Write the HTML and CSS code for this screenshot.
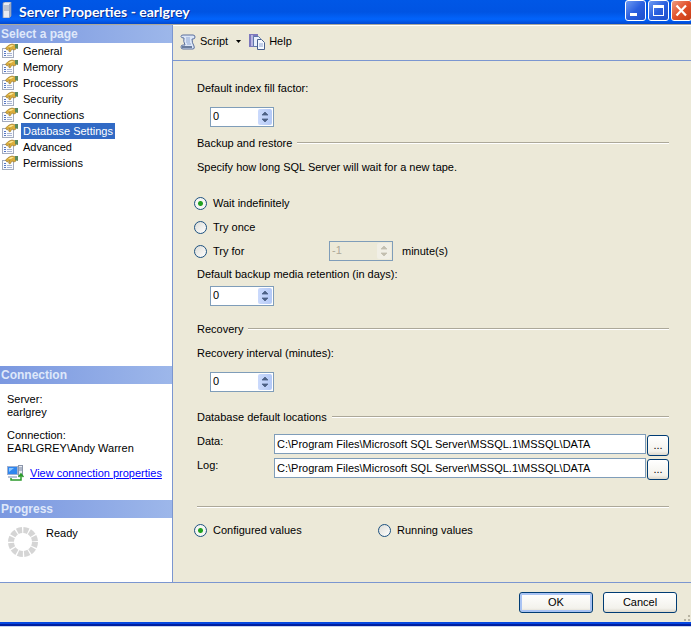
FILE: index.html
```html
<!DOCTYPE html>
<html lang="en">
<head>
  <meta charset="UTF-8" />
  <meta name="viewport" content="width=device-width, initial-scale=1.0"/>
  <title>Server Properties - earlgrey</title>
  <link rel="stylesheet" href="styles.css">
</head>
<body>
  <!-- shared icons -->
  <svg class="sprite" aria-hidden="true">
    <symbol id="icon-page" viewBox="0 0 16 16">
      <rect x="0.5" y="5.5" width="11" height="9" fill="#fafbfe" stroke="#a3abbd"/>
      <path d="M2 8h2v1H2zM2 10h2v1H2zM2 12h2v1H2z" fill="#5577c4"/>
      <path d="M5 10h5v1H5zM5 12h5v1H5z" fill="#a9b5d2"/>
      <path d="M3.500 5L7 2l3-1 4 1v4l-2 1-2-1-2 3-1.500-1L8 5.500 5 7z" fill="#dcae3c" stroke="#94701f" stroke-width="0.6"/>
      <path d="M6 4l3-2 3 0-3 2z" fill="#fbe692"/>
      <path d="M13 1h3v5l-3-1z" fill="#5b8a5c"/>
    </symbol>
    <symbol id="icon-spin" viewBox="0 0 14 16">
      <path d="M4 6h6L7 3zM4 10h6l-3 3z" fill="currentColor" stroke="currentColor" stroke-width="0.8"/>
    </symbol>
  </svg>

  <div class="window">
    <header class="titlebar">
      <svg class="title-icon" viewBox="0 0 10 16" aria-hidden="true">
        <path d="M1 1l2-1h6v14l-2 2H1z" fill="#e8ecf2" stroke="#8794ad" stroke-width="0.8"/>
        <path d="M7 2l2-1v13l-2 2z" fill="#9aa8c2"/>
        <path d="M2 4h5M2 6h5M2 8h5" stroke="#8f9bb0"/>
      </svg>
      <h1>Server Properties - earlgrey</h1>
      <button class="caption-button" aria-label="Minimize">
        <svg viewBox="0 0 19 19"><path d="M4 12h7v3H4z" fill="#fff"/></svg>
      </button>
      <button class="caption-button" aria-label="Maximize">
        <svg viewBox="0 0 19 19"><path d="M4 4h11v11H4zM5 7v7h9V7z" fill="#fff" fill-rule="evenodd"/></svg>
      </button>
      <button class="caption-button close" aria-label="Close">
        <svg viewBox="0 0 19 19"><path d="M4.500 4.500l9.500 10M14 4.500l-9.500 10" stroke="#fff" stroke-width="2.2"/></svg>
      </button>
    </header>

    <div class="main">
      <aside class="sidebar">
        <h2>Select a page</h2>
        <nav class="pages">
          <a href="#"><svg><use href="#icon-page"/></svg><span>General</span></a>
          <a href="#"><svg><use href="#icon-page"/></svg><span>Memory</span></a>
          <a href="#"><svg><use href="#icon-page"/></svg><span>Processors</span></a>
          <a href="#"><svg><use href="#icon-page"/></svg><span>Security</span></a>
          <a href="#"><svg><use href="#icon-page"/></svg><span>Connections</span></a>
          <a href="#" class="selected"><svg><use href="#icon-page"/></svg><span>Database Settings</span></a>
          <a href="#"><svg><use href="#icon-page"/></svg><span>Advanced</span></a>
          <a href="#"><svg><use href="#icon-page"/></svg><span>Permissions</span></a>
        </nav>

        <h2>Connection</h2>
        <div class="connection">
          <p>Server:<br>earlgrey</p>
          <p>Connection:<br>EARLGREY\Andy Warren</p>
          <div class="view-link">
            <svg viewBox="0 0 17 16" aria-hidden="true">
              <rect x="0.5" y="1.5" width="10" height="8" fill="#2f86ee" stroke="#9fb0d0"/>
              <path d="M2 3h5l-5 4z" fill="#8cc6ff"/>
              <path d="M1 11h9v2H1z" fill="#b9c2d6"/>
              <rect x="11.5" y="0.5" width="4" height="10" fill="#e8ebf2" stroke="#8c96ab"/>
              <path d="M12 3h3M12 5h3" stroke="#7483a0"/>
              <path d="M4 13v2h10v-5M11.500 12L14 9l2.500 3" fill="none" stroke="#2b9a2b" stroke-width="1.500"/>
            </svg>
            <a href="#">View connection properties</a>
          </div>
        </div>

        <h2>Progress</h2>
        <div class="progress">
          <svg viewBox="0 0 32 32" aria-hidden="true">
            <circle cx="16" cy="16" r="12" fill="none" stroke="#d5d5d5" stroke-width="6" stroke-dasharray="5 1.283"/>
          </svg>
          <span>Ready</span>
        </div>
      </aside>

      <section class="content">
        <div class="toolbar">
          <button>
            <svg viewBox="0 0 16 16" aria-hidden="true">
              <path d="M3 1h10q2 0 2 2t-2 2h-1q0 4 2 7 1 3-1 3H3q-2 0-2-2t2-2h2Q3 7 4 4 1 4 1 2.500T3 1z" fill="#dce7f8" stroke="#5a6f9c"/>
              <path d="M6 4h4M6 6h4M6 8h4M7 10h4" stroke="#8fa6d2"/>
              <path d="M2 13h10" stroke="#43587f" stroke-width="1.500"/>
            </svg>
            Script
          </button>
          <button class="arrow" aria-label="Script options"><svg viewBox="0 0 5 3"><path d="M0 0h5L2.500 3z"/></svg></button>
          <button class="help">
            <svg viewBox="0 0 16 16" aria-hidden="true">
              <path d="M0 0h9v13H0z" fill="#7d78bd"/>
              <path d="M2 1h2v11H2z" fill="#b9b6e2"/>
              <path d="M4.500 2.500h5l2 2v8h-7z" fill="#eaf1fc" stroke="#6079ab"/>
              <path d="M8.500 5.500h4l3 3v7h-7z" fill="#f5f9ff" stroke="#49618f"/>
              <path d="M10 10h4M10 12h4" stroke="#8fa6d2"/>
            </svg>
            Help
          </button>
        </div>

        <form class="settings">
          <label class="top-label" for="fillFactor">Default index fill factor:</label>
          <div class="spinner">
            <input type="text" id="fillFactor" value="0"/>
            <button type="button" aria-label="Change fill factor"><svg><use href="#icon-spin"/></svg></button>
          </div>

          <h3 class="backup">Backup and restore</h3>
          <p class="line">Specify how long SQL Server will wait for a new tape.</p>

          <div class="wait-options">
            <div class="radio-row"><input type="radio" name="wait" id="waitForever" checked/><label for="waitForever">Wait indefinitely</label></div>
            <div class="radio-row"><input type="radio" name="wait" id="tryOnce"/><label for="tryOnce">Try once</label></div>
            <div class="radio-row">
              <input type="radio" name="wait" id="tryFor"/><label class="try-for" for="tryFor">Try for</label>
              <div class="spinner disabled">
                <input type="text" id="tryMinutes" value="-1" disabled/>
                <button type="button" aria-label="Change minutes" disabled><svg><use href="#icon-spin"/></svg></button>
              </div>
              <label class="unit" for="tryMinutes">minute(s)</label>
            </div>
          </div>

          <label class="retention-label" for="retention">Default backup media retention (in days):</label>
          <div class="spinner retention">
            <input type="text" id="retention" value="0"/>
            <button type="button" aria-label="Change retention"><svg><use href="#icon-spin"/></svg></button>
          </div>

          <h3 class="recovery">Recovery</h3>
          <label class="line" for="recoveryInterval">Recovery interval (minutes):</label>
          <div class="spinner interval">
            <input type="text" id="recoveryInterval" value="0"/>
            <button type="button" aria-label="Change interval"><svg><use href="#icon-spin"/></svg></button>
          </div>

          <h3 class="locations">Database default locations</h3>
          <div class="path-row">
            <label for="dataPath">Data:</label>
            <input type="text" id="dataPath" value="C:\Program Files\Microsoft SQL Server\MSSQL.1\MSSQL\DATA"/>
            <button type="button" aria-label="Browse data path">...</button>
          </div>
          <div class="path-row">
            <label for="logPath">Log:</label>
            <input type="text" id="logPath" value="C:\Program Files\Microsoft SQL Server\MSSQL.1\MSSQL\DATA"/>
            <button type="button" aria-label="Browse log path">...</button>
          </div>

          <hr>
          <div class="value-options">
            <div class="radio-row"><input type="radio" name="values" id="configured" checked/><label for="configured">Configured values</label></div>
            <div class="radio-row"><input type="radio" name="values" id="running"/><label for="running">Running values</label></div>
          </div>
        </form>
      </section>
    </div>

    <footer class="buttons">
      <button class="default">OK</button>
      <button>Cancel</button>
      <svg class="grip" viewBox="0 0 8 8" aria-hidden="true">
        <path d="M5 1h2v2H5zM1 5h2v2H1zM5 5h2v2H5z" fill="#b8b4a2"/>
      </svg>
    </footer>
  </div>
</body>
</html>
```
FILE: styles.css
```css
* {
  box-sizing: border-box;
}
body {
  margin: 0;
  background: #c5d3ee;
  color: #000;
  font-family: "Liberation Sans", Arial, sans-serif;
  font-size: 11px;
  line-height: 13px;
}
h1, h2, h3, p {
  margin: 0;
}
button, input {
  font: inherit;
  color: inherit;
  margin: 0;
}
button {
  padding: 0;
  border: none;
  background: none;
}
svg {
  display: block;
  flex: none;
}
.sprite {
  position: absolute;
  width: 0;
  height: 0;
}
.window {
  display: flex;
  flex-direction: column;
  min-height: calc(100vh - 1px);
  background: #ece9d8;
  border-bottom: 2px solid #001ea0;
}

/* title bar */
.titlebar {
  display: flex;
  gap: 2px;
  height: 24px;
  overflow: hidden;
  background: linear-gradient(#0057e6, #0054e3 50%, #0264fc 80%, #0148d0);
}
.title-icon {
  width: 10px;
  height: 16px;
  margin: 2px 0 0 2px;
}
.titlebar h1 {
  flex: 1;
  padding-left: 5px;
  color: #fff;
  font-family: Lato, sans-serif;
  font-size: 14px;
  font-weight: bold;
  line-height: 23px;
  text-shadow: 1px 1px #0a2f94;
}
.caption-button {
  width: 21px;
  height: 21px;
  border: 1px solid #fff;
  border-radius: 3px;
  background: linear-gradient(135deg, #6f9bf2, #2a5fdf 50%, #1c4ecb);
}
.caption-button svg {
  width: 19px;
  height: 19px;
}
.caption-button.close {
  margin-right: -1px;
  background: linear-gradient(135deg, #ee9a80, #e2512c 50%, #c63c14);
}

.main {
  flex: 1;
  display: flex;
  border-top: 1px solid #aca899;
  border-bottom: 1px solid #7b96d0;
}

/* left side */
.sidebar {
  display: flex;
  flex-direction: column;
  width: 173px;
  border-right: 1px solid #7b96d0;
  background: #fff;
}
.sidebar h2 {
  height: 18px;
  padding-left: 1px;
  background: linear-gradient(90deg, #7b98e0, #9db7ea);
  color: #dfe8fa;
  font-size: 12px;
  font-weight: bold;
  line-height: 18px;
}
.pages {
  flex: 1;
}
.pages a {
  display: flex;
  gap: 3px;
  height: 16px;
  padding-left: 2px;
  color: #000;
  text-decoration: none;
}
.pages svg {
  width: 16px;
  height: 16px;
}
.pages span {
  padding: 0 2px;
  line-height: 16px;
}
.pages .selected span {
  background: #316ac5;
  color: #fff;
}
.connection {
  height: 116px;
  padding: 9px 7px 0;
}
.connection p {
  margin-bottom: 10px;
}
.view-link {
  display: flex;
  align-items: center;
  gap: 6px;
  white-space: nowrap;
}
.view-link svg {
  width: 17px;
  height: 16px;
}
.view-link a {
  color: #00f;
}
.progress {
  display: flex;
  gap: 7px;
  height: 64px;
  padding: 8px 7px;
  line-height: 15px;
}
.progress svg {
  width: 32px;
  height: 32px;
}

/* right side */
.content {
  flex: 1;
}
.toolbar {
  display: flex;
  align-items: center;
  height: 36px;
  padding: 0 7px 3px;
  border-top: 1px solid #fff;
  border-bottom: 1px solid #7b96d0;
}
.toolbar button {
  display: flex;
  align-items: center;
  gap: 4px;
}
.toolbar svg {
  width: 16px;
  height: 16px;
}
.toolbar .arrow {
  padding: 0 8px;
}
.toolbar .arrow svg {
  width: 5px;
  height: 3px;
}
.settings {
  padding: 19px 22px 0 24px;
}
.top-label, .retention-label {
  display: block;
  line-height: 16px;
}
.line {
  display: block;
  line-height: 24px;
}
.spinner {
  display: flex;
  width: 64px;
  height: 20px;
  margin: 11px 0 0 13px;
  padding: 1px;
  border: 1px solid #7f9db9;
  background: #fff;
}
.spinner input {
  flex: 1;
  min-width: 0;
  padding: 0 1px 2px;
  border: none;
  background: none;
}
.spinner button {
  width: 14px;
  height: 16px;
  border-radius: 2px;
  background: linear-gradient(90deg, #cbdafc, #b4c9f6);
  color: #4d6185;
}
.spinner button svg {
  width: 14px;
  height: 16px;
}
.spinner.disabled {
  margin: 0;
  background: #ece9d8;
  color: #aca899;
}
.spinner.disabled button {
  background: #f1efe6;
  color: #c3bfb0;
}
.settings h3 {
  display: flex;
  align-items: center;
  gap: 5px;
  font-size: 11px;
  font-weight: normal;
  line-height: 24px;
}
.settings h3::after {
  content: "";
  flex: 1;
  height: 1px;
  background: #aca899;
  border-bottom: 1px solid #fff;
}
.backup {
  padding-top: 4px;
}
.wait-options {
  margin: 12px 0 3px;
}
.radio-row {
  display: flex;
  align-items: center;
  height: 24px;
  margin-left: -3px;
}
.radio-row input[type="radio"] {
  appearance: none;
  width: 13px;
  height: 13px;
  margin-right: 6px;
  border: 1px solid #1c5180;
  border-radius: 50%;
  background: linear-gradient(135deg, #dcdcd6, #fff);
}
.radio-row input[type="radio"]:checked {
  background: radial-gradient(circle, #21a121 2px, #f6f6f3 3px);
}
.try-for {
  width: 116px;
}
.unit {
  padding-left: 9px;
}
.spinner.retention {
  margin-top: 4px;
}
.recovery {
  padding-top: 11px;
}
.spinner.interval {
  margin-top: 7px;
}
.locations {
  padding: 13px 0 3px;
}
.path-row {
  display: flex;
  align-items: flex-start;
  height: 24px;
}
.path-row label {
  width: 77px;
  line-height: 18px;
}
.path-row input {
  flex: 1;
  min-width: 0;
  height: 20px;
  margin-top: 2px;
  padding: 0 2px;
  border: 1px solid #7f9db9;
  background: #fff;
}
.path-row button {
  width: 22px;
  height: 21px;
  margin: 3px 0 0 1px;
}
.path-row button, .buttons button {
  border: 1px solid #003c74;
  border-radius: 3px;
  background: linear-gradient(#fff, #f3f2ec 80%, #dcd8cc);
}
hr {
  height: 2px;
  margin: 26px 0 10px;
  border: none;
  border-bottom: 1px solid #fff;
  background: #aca899;
}
.value-options {
  display: flex;
}
.value-options .radio-row {
  width: 187px;
}

/* bottom buttons */
.buttons {
  display: flex;
  justify-content: flex-end;
  align-items: flex-start;
  gap: 10px;
  height: 41px;
  padding: 9px 0 0;
  border-bottom: 2px solid #0648e0;
}
.buttons button {
  width: 74px;
  height: 21px;
}
.buttons .default {
  box-shadow: inset 0 0 0 2px #a9c3f3;
}
.grip {
  align-self: flex-end;
  width: 8px;
  height: 8px;
  margin-left: -4px;
}
```
